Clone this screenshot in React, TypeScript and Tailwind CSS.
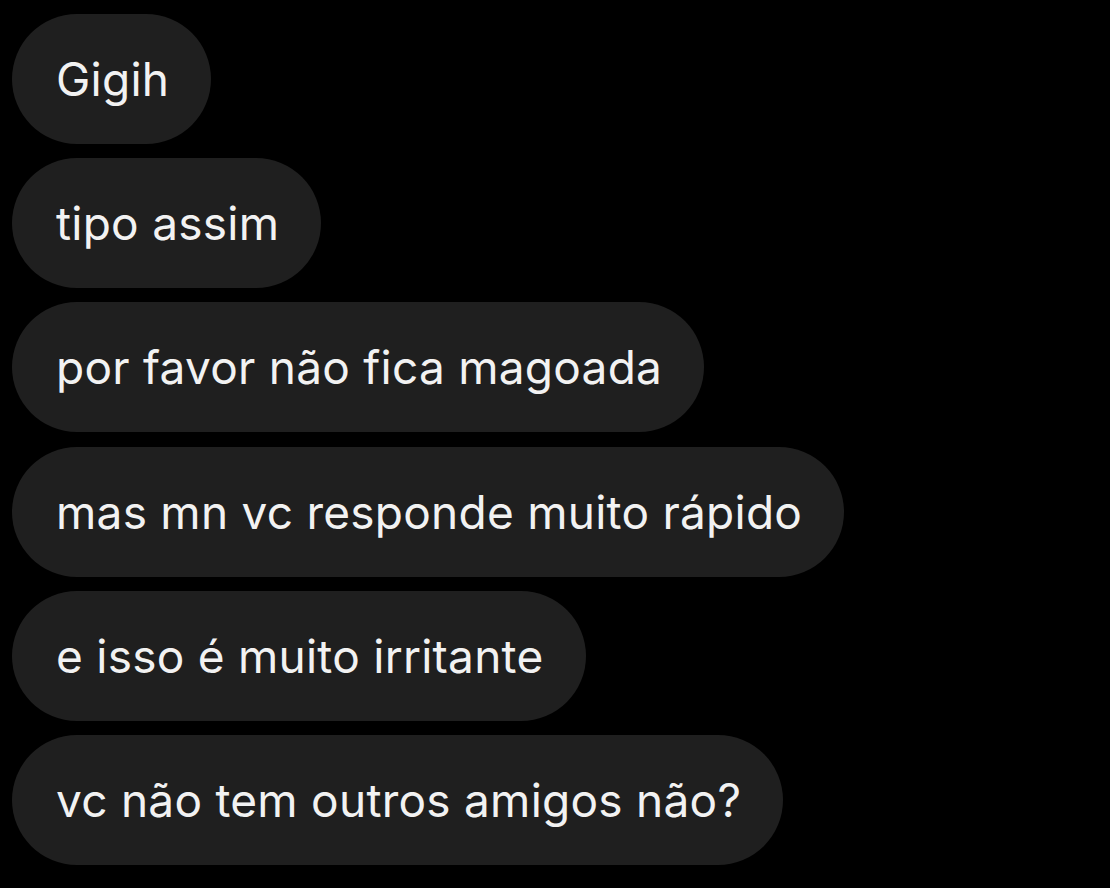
import React from "react";

const msgs = [
  "Gigih",
  "tipo assim",
  "por favor não fica magoada",
  "mas mn vc responde muito rápido",
  "e isso é muito irritante",
  "vc não tem outros amigos não?",
];

export default function App() {
  return (
    <div
      className="w-[1110px] h-[888px] bg-black flex flex-col items-start gap-[14.2px] pt-[14px] pl-[12px] overflow-hidden"
      style={{ fontFamily: "Inter, 'Noto Sans', sans-serif" }}
    >
      {msgs.map((m) => (
        <div
          key={m}
          className="h-[130px] rounded-full bg-[#1f1f1f] pl-[44px] pr-[42px] flex items-center text-[46px] tracking-[0.25px] text-[#f2f2f2] leading-none whitespace-nowrap"
        >
          {m}
        </div>
      ))}
    </div>
  );
}
